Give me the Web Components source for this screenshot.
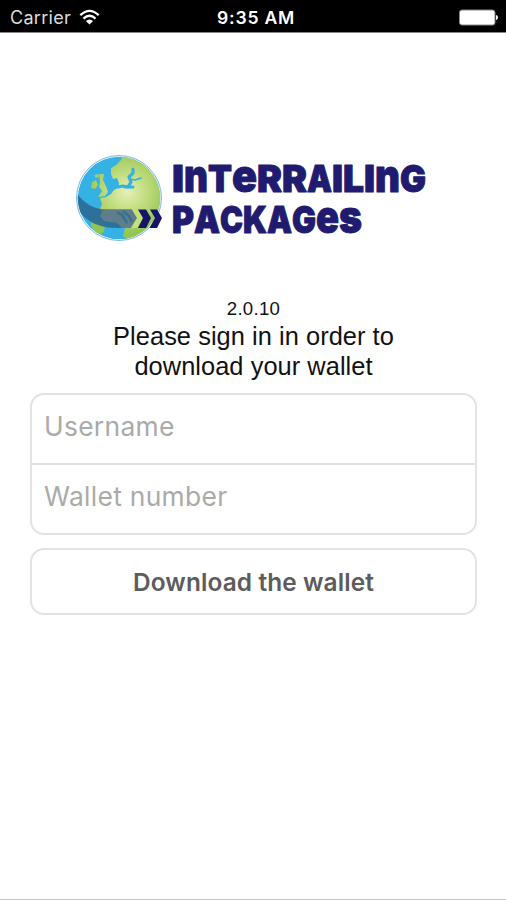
<!DOCTYPE html>
<html lang="en">
<head>
<meta charset="utf-8">
<title>Interrailing Packages</title>
<style>
    html, body {
        margin: 0;
        height: 100%;
        background: #fff;
        overflow: hidden;
    }

    body {
        font-family: "Liberation Sans", Arial, sans-serif;
    }
</style>
</head>
<body>
<login-screen></login-screen>

<script>
class StatusBar extends HTMLElement {
    constructor() {
        super();
        this.attachShadow({ mode: "open" });
    }

    connectedCallback() {
        this.shadowRoot.innerHTML = `
            <style>
                :host {
                    display: grid;
                    grid-template-columns: 1fr auto 1fr;
                    align-items: center;
                    box-sizing: border-box;
                    height: 33px;
                    padding: 3px 8px 0 10px;
                    background: #000;
                    border-bottom: 1px solid #888;
                    color: #fff;
                    font: 18px/28px Inter, sans-serif;
                }

                .carrier {
                    display: flex;
                    align-items: center;
                    gap: 8px;
                    color: #ddd;
                }

                .label {
                    width: 61px;
                    letter-spacing: 0.3px;
                    white-space: nowrap;
                }

                .time {
                    font-size: 17.6px;
                    font-weight: 600;
                    letter-spacing: 0.75px;
                    margin-left: 4px;
                }

                .battery {
                    justify-self: end;
                }

                svg {
                    display: block;
                }
            </style>

            <div class="carrier">
                <span class="label"><slot name="carrier"></slot></span>
                <svg width="21" height="17" viewBox="0 0 21 17" fill="none" stroke="#fff" stroke-width="2.3">
                    <path d="M1.3 6.2Q10.5 -2.4 19.7 6.2"/>
                    <path d="M4.5 9.6Q10.5 4 16.5 9.6"/>
                    <path d="M6.9 12Q10.5 8.8 14.1 12L10.5 15.6Z" fill="#fff" stroke="none"/>
                </svg>
            </div>
            <span class="time"><slot name="time"></slot></span>
            <svg class="battery" width="40" height="17" viewBox="0 0 40 17">
                <rect x="1.5" y="1" width="35.5" height="15" rx="2.5" fill="#fff" stroke="#888"/>
                <path d="M38 6q2 .4 2 2.6T38 11Z" fill="#fff"/>
            </svg>
        `;
    }
}

class BrandLogo extends HTMLElement {
    constructor() {
        super();
        this.attachShadow({ mode: "open" });
    }

    // each entry: glyph, left edge, size; a glyph runs up to the next left edge
    letters(list, end) {
        return list.map(([glyph, x, size], i) => {
            const next = i + 1 < list.length ? list[i + 1][1] : end;
            return `<tspan x="${x}" textLength="${next - x}" lengthAdjust="spacingAndGlyphs" font-size="${size || 37}">${glyph}</tspan>`;
        }).join("");
    }

    connectedCallback() {
        const top = this.letters([
            ["I", 97], ["n", 109, 45], ["T", 133], ["e", 157, 45],
            ["R", 182], ["R", 207], ["A", 232], ["I", 257],
            ["L", 268], ["I", 289], ["n", 300, 45], ["G", 325]
        ], 351);
        const bottom = this.letters([
            ["P", 97], ["A", 119], ["C", 145], ["K", 168],
            ["A", 192], ["G", 217], ["e", 241, 45], ["s", 264, 45]
        ], 287);

        this.shadowRoot.innerHTML = `
            <style>
                :host {
                    display: block;
                    width: 354px;
                    height: 90px;
                }

                svg {
                    display: block;
                    overflow: visible;
                }

                text {
                    font-family: Inter, sans-serif;
                    font-weight: 900;
                    fill: #211b70;
                    stroke: #211b70;
                    stroke-width: 1;
                    stroke-linejoin: round;
                }
            </style>

            <svg width="354" height="90" viewBox="0 0 354 90">
                <defs>
                    <radialGradient id="land" gradientUnits="userSpaceOnUse" cx="52" cy="38" r="42">
                        <stop offset="0" stop-color="#e6f0b8"/>
                        <stop offset=".45" stop-color="#c3dd80"/>
                        <stop offset="1" stop-color="#93c552"/>
                    </radialGradient>
                    <clipPath id="disc"><circle cx="44" cy="44" r="41.3"/></clipPath>
                </defs>
                <circle cx="44" cy="44" r="42.5" fill="#e9f5fb" stroke="#6fb2da" stroke-width=".9"/>
                <g clip-path="url(#disc)">
                    <circle cx="44" cy="44" r="41.3" fill="#35b1e3"/>
                    <g fill="url(#land)">
                        <path d="M48 0L46 6L41 11L36 14L36 20L38 25L42 24L44 29L43 34L39 36L36 40L31 43L25 44L27 50L24 57L29 62L40 60L50 74L48 82L56 90H90V0Z"/>
                        <path d="M24 20L29 20L28 26L31 32L33 38L30 42L23 43L27 37L24 33L25 28Z"/>
                        <path d="M17 28L21 26L23 31L20 35L16 34Z"/>
                        <path d="M19 21L23 20L24 23L21 24Z"/>
                        <path d="M17 65L28 68L30 73L28 79L22 80L16 72Z"/>
                    </g>
                    <g fill="none" stroke="#35b1e3" stroke-linecap="round" stroke-linejoin="round">
                        <path d="M41 28L43 33L48 32L53 33L56 28L54 23L58 19V15" stroke-width="3.2"/>
                        <path d="M55 25L60 26L66 24" stroke-width="1.7"/>
                        <path d="M50 33H58" stroke-width="3"/>
                    </g>
                    <path d="M1 38C9 50 19 55 32 55.5H57L62 64L56 74H42C25 74 12 68 4 57Z" fill="#2b6792" opacity=".88"/>
                    <path d="M28 55.5H57L62 64L56 74H47L42 69L29 67L25 62Z" fill="#66808a" opacity=".85"/>
                    <path d="M42 58L47 61L52 69M48 57L54 62L57 68" fill="none" stroke="#356f94" stroke-width="2.4"/>
                    <path d="M57 55.5H62L68 64L62 74H56L62 64Z" fill="#c5e079"/>
                </g>
                <g fill="#171467">
                    <path d="M63 55.5H71L76 64L71 74H63L68 64Z"/>
                    <path d="M75 55.5H82L87 64L82 74H74.5L80 64Z"/>
                </g>
                <text y="38">${top}</text>
                <text y="79">${bottom}</text>
            </svg>
        `;
    }
}

class SignInIntro extends HTMLElement {
    constructor() {
        super();
        this.attachShadow({ mode: "open" });
    }

    connectedCallback() {
        this.shadowRoot.innerHTML = `
            <style>
                :host {
                    display: block;
                    text-align: center;
                    color: #111;
                    font: 25.4px/30px "Liberation Sans", Arial, sans-serif;
                }

                .version {
                    height: 24px;
                    font-size: 18.6px;
                    line-height: 24px;
                    letter-spacing: 0.3px;
                }

                .message {
                    width: 300px;
                    margin: 0 auto;
                    letter-spacing: 0.05px;
                }
            </style>

            <div class="version"><slot name="version"></slot></div>
            <div class="message"><slot></slot></div>
        `;
    }
}

class FieldGroup extends HTMLElement {
    constructor() {
        super();
        this.attachShadow({ mode: "open" });
    }

    connectedCallback() {
        this.shadowRoot.innerHTML = `
            <style>
                :host {
                    display: flex;
                    flex-direction: column;
                    box-sizing: border-box;
                    height: 142px;
                    border: 2px solid #e3e3e3;
                    border-radius: 14px;
                    overflow: hidden;
                }

                ::slotted(:not(:last-child)) {
                    border-bottom: 2px solid #e0e0e0;
                }
            </style>

            <slot></slot>
        `;
    }
}

class TextField extends HTMLElement {
    constructor() {
        super();
        this.attachShadow({ mode: "open" });
    }

    connectedCallback() {
        this.shadowRoot.innerHTML = `
            <style>
                :host {
                    display: flex;
                    flex: 1;
                    align-items: center;
                    padding: 0 12px 6px;
                    color: #aaa;
                    font: 26.4px/32px Inter, sans-serif;
                    letter-spacing: 0.3px;
                }
            </style>

            <span><slot></slot></span>
        `;
    }
}

class ActionButton extends HTMLElement {
    constructor() {
        super();
        this.attachShadow({ mode: "open" });
    }

    connectedCallback() {
        this.shadowRoot.innerHTML = `
            <style>
                :host {
                    display: block;
                }

                button {
                    display: block;
                    box-sizing: border-box;
                    width: 100%;
                    height: 67px;
                    padding: 0;
                    border: 2px solid #e3e3e3;
                    border-radius: 14px;
                    background: #fff;
                    color: #5c5c5c;
                    font: 600 24.4px/32px Inter, sans-serif;
                    letter-spacing: 0.12px;
                }
            </style>

            <button type="button"><slot></slot></button>
        `;
    }
}

class LoginScreen extends HTMLElement {
    constructor() {
        super();
        this.attachShadow({ mode: "open" });
    }

    connectedCallback() {
        this.shadowRoot.innerHTML = `
            <style>
                :host {
                    display: flex;
                    flex-direction: column;
                    box-sizing: border-box;
                    width: 506px;
                    height: 900px;
                    background: #fff;
                    border-bottom: 1px solid #c6c6c6;
                }

                main {
                    display: flex;
                    flex-direction: column;
                    padding: 121px 29px 0 30px;
                }

                brand-logo {
                    margin-left: 45px;
                }

                sign-in-intro {
                    margin-top: 53px;
                }

                field-group {
                    margin-top: 12px;
                }

                action-button {
                    margin-top: 13px;
                }
            </style>

            <status-bar>
                <span slot="carrier">Carrier</span>
                <span slot="time">9:35 AM</span>
            </status-bar>
            <main>
                <brand-logo></brand-logo>
                <sign-in-intro>
                    <span slot="version">2.0.10</span>
                    Please sign in in order to download your wallet
                </sign-in-intro>
                <field-group>
                    <text-field>Username</text-field>
                    <text-field>Wallet number</text-field>
                </field-group>
                <action-button>Download the wallet</action-button>
            </main>
        `;
    }
}

customElements.define("status-bar", StatusBar);
customElements.define("brand-logo", BrandLogo);
customElements.define("sign-in-intro", SignInIntro);
customElements.define("field-group", FieldGroup);
customElements.define("text-field", TextField);
customElements.define("action-button", ActionButton);
customElements.define("login-screen", LoginScreen);
</script>
</body>
</html>
